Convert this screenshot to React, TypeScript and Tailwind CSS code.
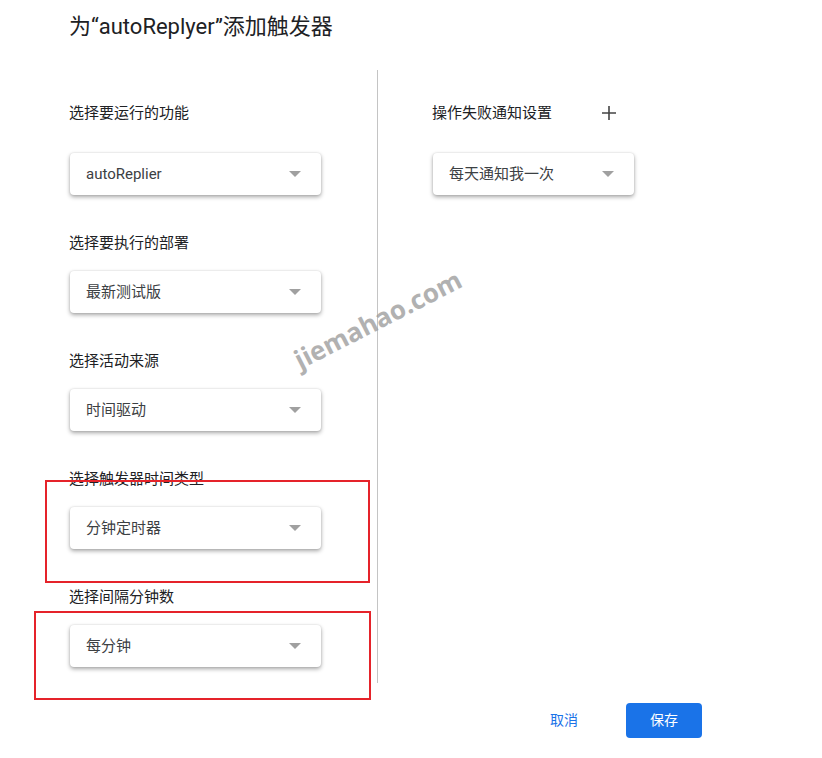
import React from "react";

const font = { fontFamily: 'Roboto, "Noto Sans CJK SC", sans-serif' };

function Caret() {
  return (
    <svg width="12" height="6" viewBox="0 0 12 6" className="shrink-0">
      <path d="M0 0 L12 0 L6 6 Z" fill="#a0a0a0" />
    </svg>
  );
}

function Select({ value, width }: { value: string; width: string }) {
  return (
    <div
      className={`${width} h-[42px] ml-px rounded-[4px] bg-white flex items-center justify-between pl-[16px] pr-[20px] shadow-[0_2px_4px_rgba(0,0,0,0.35),0_0_2px_rgba(0,0,0,0.12)]`}
    >
      <span className="text-[15px] text-[#3c4043]">{value}</span>
      <Caret />
    </div>
  );
}

function Section({ label, value, first }: { label: string; value: string; first?: boolean }) {
  return (
    <div className={`flex flex-col ${first ? "" : "mt-[38px]"}`}>
      <div className="text-[15px] leading-[20px] text-[#202124]">{label}</div>
      <div className={first ? "mt-[30px]" : "mt-[18px]"}>
        <Select value={value} width="w-[251px]" />
      </div>
    </div>
  );
}

export default function App() {
  return (
    <div className="relative w-[822px] h-[758px] bg-white overflow-hidden" style={font}>
      <div className="pl-[69px] pt-[12px] h-[70px]">
        <div className="text-[22px] leading-[30px] text-[#202124]">为“autoReplyer”添加触发器</div>
      </div>
      <div className="flex h-[613px]">
        <div className="w-[308px] pl-[69px] box-content pt-[33px]">
          <Section first label="选择要运行的功能" value="autoReplier" />
          <Section label="选择要执行的部署" value="最新测试版" />
          <Section label="选择活动来源" value="时间驱动" />
          <Section label="选择触发器时间类型" value="分钟定时器" />
          <Section label="选择间隔分钟数" value="每分钟" />
        </div>
        <div className="w-px bg-[#c4c4c4]" />
        <div className="pl-[54px] pt-[33px]">
          <div className="flex items-center h-[20px]">
            <span className="text-[15px] leading-[20px] text-[#202124] w-[169px]">操作失败通知设置</span>
            <svg width="16" height="16" viewBox="0 0 16 16">
              <path d="M8 1 V15 M1 8 H15" stroke="#444" strokeWidth="1.6" />
            </svg>
          </div>
          <div className="mt-[30px]">
            <Select value="每天通知我一次" width="w-[201px]" />
          </div>
        </div>
      </div>
      <div className="flex justify-end pr-[120px] pt-[20px] gap-[24px]">
        <button className="w-[76px] h-[35px] text-[14px] text-[#1a73e8] bg-white">取消</button>
        <button className="w-[76px] h-[35px] rounded-[4px] text-[14px] text-white bg-[#1a73e8]">保存</button>
      </div>

      {/* annotations */}
      <div className="absolute left-[45px] top-[480px] w-[325px] h-[103px] border-2 border-[#e5232a]" />
      <div className="absolute left-[34px] top-[611px] w-[337px] h-[89px] border-2 border-[#e5232a]" />
      <div
        className="absolute left-[286px] top-[300px] text-[26px] font-bold text-[#9e9e9e] opacity-80 -rotate-[27deg]"
        style={{ fontFamily: '"Open Sans", sans-serif' }}
      >
        jiemahao.com
      </div>
    </div>
  );
}
